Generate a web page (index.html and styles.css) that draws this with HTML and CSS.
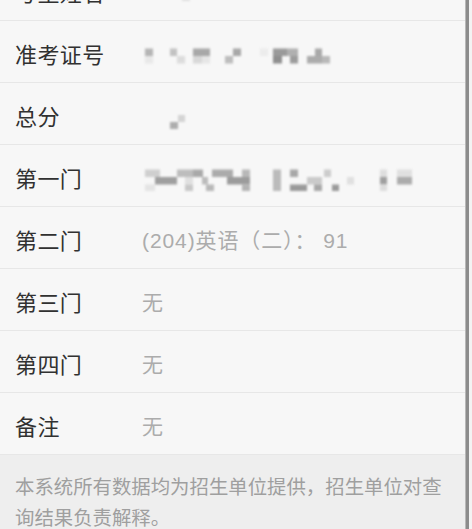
FILE: index.html
```html
<!DOCTYPE html>
<html lang="zh-CN">
<head>
<meta charset="utf-8">
<title>成绩查询</title>
<link rel="stylesheet" href="styles.css">
</head>
<body>
<div class="screen">
  <div class="page">
    <div class="row cut">
      <div class="row-inner">
        <span class="label">考生姓名</span>
        <svg class="mosaic" width="90" height="28" viewBox="0 0 90 28">
          <rect x="25" y="14" width="8" height="7" fill="#d6d6d6"/>
          <rect x="40" y="17" width="8" height="7" fill="#e0e0e0"/>
          <rect x="60" y="14" width="8" height="7" fill="#dadada"/>
        </svg>
      </div>
    </div>
    <div class="row">
      <span class="label">准考证号</span>
      <svg class="mosaic" width="190" height="28" viewBox="0 0 190 28">
        <rect x="3" y="9.5" width="8" height="7.5" fill="#b5b5b5"/>
        <rect x="3" y="17" width="8" height="7.5" fill="#e8e8e8"/>
        <rect x="28" y="9.5" width="7" height="7.5" fill="#c2c2c2"/>
        <rect x="35" y="17" width="8" height="7.5" fill="#dcdcdc"/>
        <rect x="51" y="9.5" width="17" height="7.5" fill="#a8a8a8"/>
        <rect x="51" y="17" width="9" height="7.5" fill="#d8d8d8"/>
        <rect x="60" y="17" width="8" height="7.5" fill="#e6e6e6"/>
        <rect x="83" y="17" width="8" height="7.5" fill="#bdbdbd"/>
        <rect x="91" y="9.5" width="8" height="7.5" fill="#a8a8a8"/>
        <rect x="118" y="9.5" width="8" height="7.5" fill="#ececec"/>
        <rect x="131" y="9.5" width="14" height="7.5" fill="#9a9a9a"/>
        <rect x="145" y="9.5" width="11" height="7.5" fill="#b0b0b0"/>
        <rect x="131" y="17" width="9" height="7.5" fill="#8f8f8f"/>
        <rect x="148" y="17" width="8" height="7.5" fill="#9c9c9c"/>
        <rect x="165" y="17" width="15" height="7.5" fill="#acacac"/>
        <rect x="173" y="9.5" width="7" height="7.5" fill="#a9a9a9"/>
        <rect x="180" y="17" width="8" height="7.5" fill="#b9b9b9"/>
      </svg>
    </div>
    <div class="row">
      <span class="label">总分</span>
      <svg class="mosaic" width="60" height="28" viewBox="0 0 60 28">
        <rect x="36" y="14" width="7" height="7" fill="#d4d4d4"/>
        <rect x="28" y="21" width="8" height="7" fill="#adadad"/>
      </svg>
    </div>
    <div class="row">
      <span class="label">第一门</span>
      <svg class="mosaic" width="275" height="28" viewBox="0 0 275 28">
        <rect x="3" y="6.5" width="15" height="7.5" fill="#cfcfcf"/>
        <rect x="13" y="14" width="22" height="7.5" fill="#9f9f9f"/>
        <rect x="3" y="21.5" width="10" height="6.5" fill="#e4e4e4"/>
        <rect x="35" y="6.5" width="16" height="7.5" fill="#bdbdbd"/>
        <rect x="43" y="14" width="8" height="7.5" fill="#e0e0e0"/>
        <rect x="43" y="21.5" width="8" height="6.5" fill="#c8c8c8"/>
        <rect x="51" y="6.5" width="10" height="7.5" fill="#a9a9a9"/>
        <rect x="60" y="14" width="6" height="7.5" fill="#bcbcbc"/>
        <rect x="64" y="21.5" width="8" height="6.5" fill="#b8b8b8"/>
        <rect x="70" y="6.5" width="21" height="7.5" fill="#ababab"/>
        <rect x="85" y="14" width="23" height="7.5" fill="#9c9c9c"/>
        <rect x="100" y="6.5" width="8" height="7.5" fill="#b8b8b8"/>
        <rect x="100" y="21.5" width="8" height="6.5" fill="#b4b4b4"/>
        <rect x="131" y="6.5" width="8" height="21.5" fill="#bbbbbb"/>
        <rect x="148" y="6.5" width="8" height="7.5" fill="#a8a8a8"/>
        <rect x="148" y="21.5" width="17" height="6.5" fill="#9a9a9a"/>
        <rect x="165" y="14" width="15" height="7.5" fill="#cacaca"/>
        <rect x="172" y="21.5" width="8" height="6.5" fill="#a8a8a8"/>
        <rect x="182" y="6.5" width="7" height="7.5" fill="#cccccc"/>
        <rect x="190" y="21.5" width="7" height="6.5" fill="#9a9a9a"/>
        <rect x="205" y="14" width="7" height="7.5" fill="#e0e0e0"/>
        <rect x="238" y="6.5" width="7" height="7.5" fill="#dedede"/>
        <rect x="238" y="14" width="7" height="7.5" fill="#a0a0a0"/>
        <rect x="238" y="21.5" width="7" height="6.5" fill="#dddddd"/>
        <rect x="255" y="6.5" width="15" height="7.5" fill="#e0e0e0"/>
        <rect x="255" y="14" width="15" height="7.5" fill="#acacac"/>
      </svg>
    </div>
    <div class="row">
      <span class="label">第二门</span>
      <span class="value wide">(204)英语（二）： 91</span>
    </div>
    <div class="row">
      <span class="label">第三门</span>
      <span class="value">无</span>
    </div>
    <div class="row">
      <span class="label">第四门</span>
      <span class="value">无</span>
    </div>
    <div class="row">
      <span class="label">备注</span>
      <span class="value">无</span>
    </div>
    <div class="footer">本系统所有数据均为招生单位提供，招生单位对查询结果负责解释。</div>
  </div>
  <div class="scrollbar"></div>
  <div class="edge"></div>
</div>
</body>
</html>
```

FILE: styles.css
```css
html, body {
  margin: 0;
  padding: 0;
  height: 100%;
  overflow: hidden;
  background: #f4f4f4;
}

.screen {
  display: flex;
  height: 529px;
  font-family: "Liberation Sans", "Noto Sans CJK SC", sans-serif;
}

.page {
  width: 465px;
  flex: none;
  background: #f7f7f7;
  display: flex;
  flex-direction: column;
}

.row {
  flex: none;
  border-bottom: 1px solid #e7e7e7;
  display: flex;
  align-items: center;
  padding: 2px 0 0 15px;
  box-sizing: content-box;
  height: 59px;
}

.row.cut {
  height: 20px;
  padding: 0;
  overflow: hidden;
  display: block;
}

.row-inner {
  height: 59px;
  margin-top: -39px;
  padding-left: 15px;
  display: flex;
  align-items: center;
}

.label {
  width: 127px;
  flex: none;
  font-size: 22px;
  color: #313131;
  letter-spacing: 0.4px;
}

.value {
  font-size: 21px;
  color: #acacac;
}

.value.wide {
  letter-spacing: 0.9px;
}

.mosaic {
  display: block;
  filter: blur(0.8px);
}

.footer {
  flex: 1;
  background: #eeeeee;
  color: #9f9f9f;
  font-size: 19.4px;
  line-height: 31px;
  padding: 17px 18px 0 15px;
}

.scrollbar {
  width: 4px;
  flex: none;
  background: #8c8c8c;
  border-left: 1px solid #b8b8b8;
  box-sizing: border-box;
}

.edge {
  flex: 1;
  background: #f3f3f3;
}
```
